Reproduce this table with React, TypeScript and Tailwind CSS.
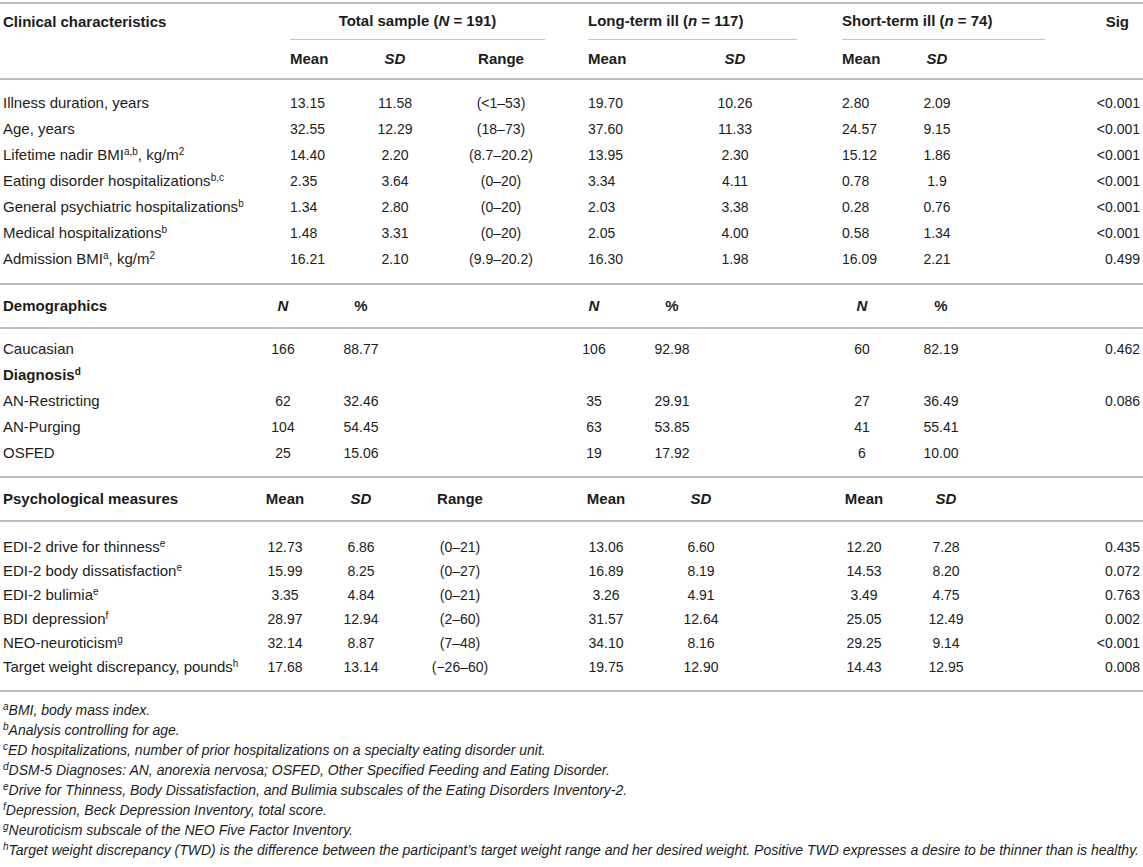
import React from 'react';

type Cell = React.ReactNode;

const font = { fontFamily: '"Liberation Sans", Arial, sans-serif' };

function Sup({ children }: { children: React.ReactNode }) {
  return <sup className="text-[10px]">{children}</sup>;
}

const clinicalCols = [
  'w-[290px] pl-[3px] text-left',
  'w-[60px] text-left',
  'w-[90px] text-center',
  'w-[122px] text-center',
  'w-[92px] ml-[26px] text-left',
  'w-[110px] text-center',
  'w-[48px] ml-[52px] text-left',
  'w-[94px] text-center',
  'flex-1 pr-[3px] text-right',
];

const demoCols = [
  'w-[250px] pl-[3px] text-left',
  'w-[66px] text-center',
  'w-[90px] text-center',
  'w-[146px] text-center',
  'w-[84px] text-center',
  'w-[72px] text-center',
  'w-[108px] ml-[100px] text-center',
  'w-[50px] text-center',
  'flex-1 pr-[3px] text-right',
];

const psychCols = [
  'w-[250px] pl-[3px] text-left',
  'w-[70px] text-center',
  'w-[82px] text-center',
  'w-[116px] text-center',
  'w-[92px] ml-[42px] text-center',
  'w-[98px] text-center',
  'w-[100px] ml-[64px] text-center',
  'w-[64px] text-center',
  'flex-1 pr-[3px] text-right',
];

function Row({
  cells,
  cols,
  className = 'h-[26px]',
  data = false,
}: {
  cells: Cell[];
  cols: string[];
  className?: string;
  data?: boolean;
}) {
  return (
    <div className={`flex items-center whitespace-nowrap ${className}`}>
      {cols.map((c, i) => (
        <div key={i} className={data && i > 0 ? `${c} text-[14px]` : c}>
          {cells[i] ?? ''}
        </div>
      ))}
    </div>
  );
}

const B = ({ children }: { children: React.ReactNode }) => <span className="font-bold">{children}</span>;
const BI = ({ children }: { children: React.ReactNode }) => <span className="font-bold italic">{children}</span>;

const clinicalRows: Cell[][] = [
  ['Illness duration, years', '13.15', '11.58', '(<1–53)', '19.70', '10.26', '2.80', '2.09', '<0.001'],
  ['Age, years', '32.55', '12.29', '(18–73)', '37.60', '11.33', '24.57', '9.15', '<0.001'],
  [<>Lifetime nadir BMI<Sup>a,b</Sup>, kg/m<Sup>2</Sup></>, '14.40', '2.20', '(8.7–20.2)', '13.95', '2.30', '15.12', '1.86', '<0.001'],
  [<>Eating disorder hospitalizations<Sup>b,c</Sup></>, '2.35', '3.64', '(0–20)', '3.34', '4.11', '0.78', '1.9', '<0.001'],
  [<>General psychiatric hospitalizations<Sup>b</Sup></>, '1.34', '2.80', '(0–20)', '2.03', '3.38', '0.28', '0.76', '<0.001'],
  [<>Medical hospitalizations<Sup>b</Sup></>, '1.48', '3.31', '(0–20)', '2.05', '4.00', '0.58', '1.34', '<0.001'],
  [<>Admission BMI<Sup>a</Sup>, kg/m<Sup>2</Sup></>, '16.21', '2.10', '(9.9–20.2)', '16.30', '1.98', '16.09', '2.21', '0.499'],
];

const demoRows: Cell[][] = [
  ['Caucasian', '166', '88.77', '', '106', '92.98', '60', '82.19', '0.462'],
  [<B>Diagnosis<Sup>d</Sup></B>],
  ['AN-Restricting', '62', '32.46', '', '35', '29.91', '27', '36.49', '0.086'],
  ['AN-Purging', '104', '54.45', '', '63', '53.85', '41', '55.41', ''],
  ['OSFED', '25', '15.06', '', '19', '17.92', '6', '10.00', ''],
];

const psychRows: Cell[][] = [
  [<>EDI-2 drive for thinness<Sup>e</Sup></>, '12.73', '6.86', '(0–21)', '13.06', '6.60', '12.20', '7.28', '0.435'],
  [<>EDI-2 body dissatisfaction<Sup>e</Sup></>, '15.99', '8.25', '(0–27)', '16.89', '8.19', '14.53', '8.20', '0.072'],
  [<>EDI-2 bulimia<Sup>e</Sup></>, '3.35', '4.84', '(0–21)', '3.26', '4.91', '3.49', '4.75', '0.763'],
  [<>BDI depression<Sup>f</Sup></>, '28.97', '12.94', '(2–60)', '31.57', '12.64', '25.05', '12.49', '0.002'],
  [<>NEO-neuroticism<Sup>g</Sup></>, '32.14', '8.87', '(7–48)', '34.10', '8.16', '29.25', '9.14', '<0.001'],
  [<>Target weight discrepancy, pounds<Sup>h</Sup></>, '17.68', '13.14', '(−26–60)', '19.75', '12.90', '14.43', '12.95', '0.008'],
];

const notes: [string, string][] = [
  ['a', 'BMI, body mass index.'],
  ['b', 'Analysis controlling for age.'],
  ['c', 'ED hospitalizations, number of prior hospitalizations on a specialty eating disorder unit.'],
  ['d', 'DSM-5 Diagnoses: AN, anorexia nervosa; OSFED, Other Specified Feeding and Eating Disorder.'],
  ['e', 'Drive for Thinness, Body Dissatisfaction, and Bulimia subscales of the Eating Disorders Inventory-2.'],
  ['f', 'Depression, Beck Depression Inventory, total score.'],
  ['g', 'Neuroticism subscale of the NEO Five Factor Inventory.'],
  ['h', 'Target weight discrepancy (TWD) is the difference between the participant’s target weight range and her desired weight. Positive TWD expresses a desire to be thinner than is healthy.'],
];

export default function App() {
  return (
    <div className="w-[1143px] h-[867px] bg-white text-[#1c1c1c] text-[15px] overflow-hidden pt-[2px]" style={font}>
      {/* clinical */}
      <div className="border-t-2 border-[#bcbcbc]">
        <div className="flex h-[36px] whitespace-nowrap">
          <div className="w-[290px] pl-[3px] flex items-center font-bold">Clinical characteristics</div>
          <div className="w-[255px] flex items-center justify-center font-bold border-b border-[#c4c4c4]">
            Total sample (<i>N</i>&nbsp;=&nbsp;191)
          </div>
          <div className="w-[209px] ml-[43px] flex items-center font-bold border-b border-[#c4c4c4]">
            Long-term ill (<i>n</i>&nbsp;=&nbsp;117)
          </div>
          <div className="w-[203px] ml-[45px] flex items-center font-bold border-b border-[#c4c4c4]">
            Short-term ill (<i>n</i>&nbsp;=&nbsp;74)
          </div>
          <div className="flex-1 flex items-center justify-end pr-[14px] font-bold">Sig</div>
        </div>
        <Row
          className="h-[40px] border-b-2 border-[#bcbcbc]"
          cols={clinicalCols}
          cells={['', <B>Mean</B>, <BI>SD</BI>, <B>Range</B>, <B>Mean</B>, <BI>SD</BI>, <B>Mean</B>, <BI>SD</BI>, '']}
        />
        <div className="pt-[10px] pb-[11px] border-b-2 border-[#bcbcbc]">
          {clinicalRows.map((r, i) => (
            <Row key={i} data cols={clinicalCols} cells={r} />
          ))}
        </div>
      </div>

      {/* demographics */}
      <Row
        className="h-[44px] border-b-2 border-[#bcbcbc]"
        cols={demoCols}
        cells={[<B>Demographics</B>, <BI>N</BI>, <B>%</B>, '', <BI>N</BI>, <B>%</B>, <BI>N</BI>, <B>%</B>, '']}
      />
      <div className="pt-[7px] pb-[10px] border-b-2 border-[#bcbcbc]">
        {demoRows.map((r, i) => (
          <Row key={i} data cols={demoCols} cells={r} />
        ))}
      </div>

      {/* psychological */}
      <Row
        className="h-[44px] border-b-2 border-[#bcbcbc]"
        cols={psychCols}
        cells={[<B>Psychological measures</B>, <B>Mean</B>, <BI>SD</BI>, <B>Range</B>, <B>Mean</B>, <BI>SD</BI>, <B>Mean</B>, <BI>SD</BI>, '']}
      />
      <div className="pt-[13px] pb-[11px] border-b-2 border-[#bcbcbc]">
        {psychRows.map((r, i) => (
          <Row key={i} data className="h-[24px]" cols={psychCols} cells={r} />
        ))}
      </div>

      {/* notes */}
      <div className="pt-[8px] pl-[3px] italic text-[14px]">
        {notes.map(([k, t]) => (
          <div key={k} className="h-[20px] leading-[20px] whitespace-nowrap">
            <sup className="text-[10px]">{k}</sup>
            {t}
          </div>
        ))}
      </div>
    </div>
  );
}
